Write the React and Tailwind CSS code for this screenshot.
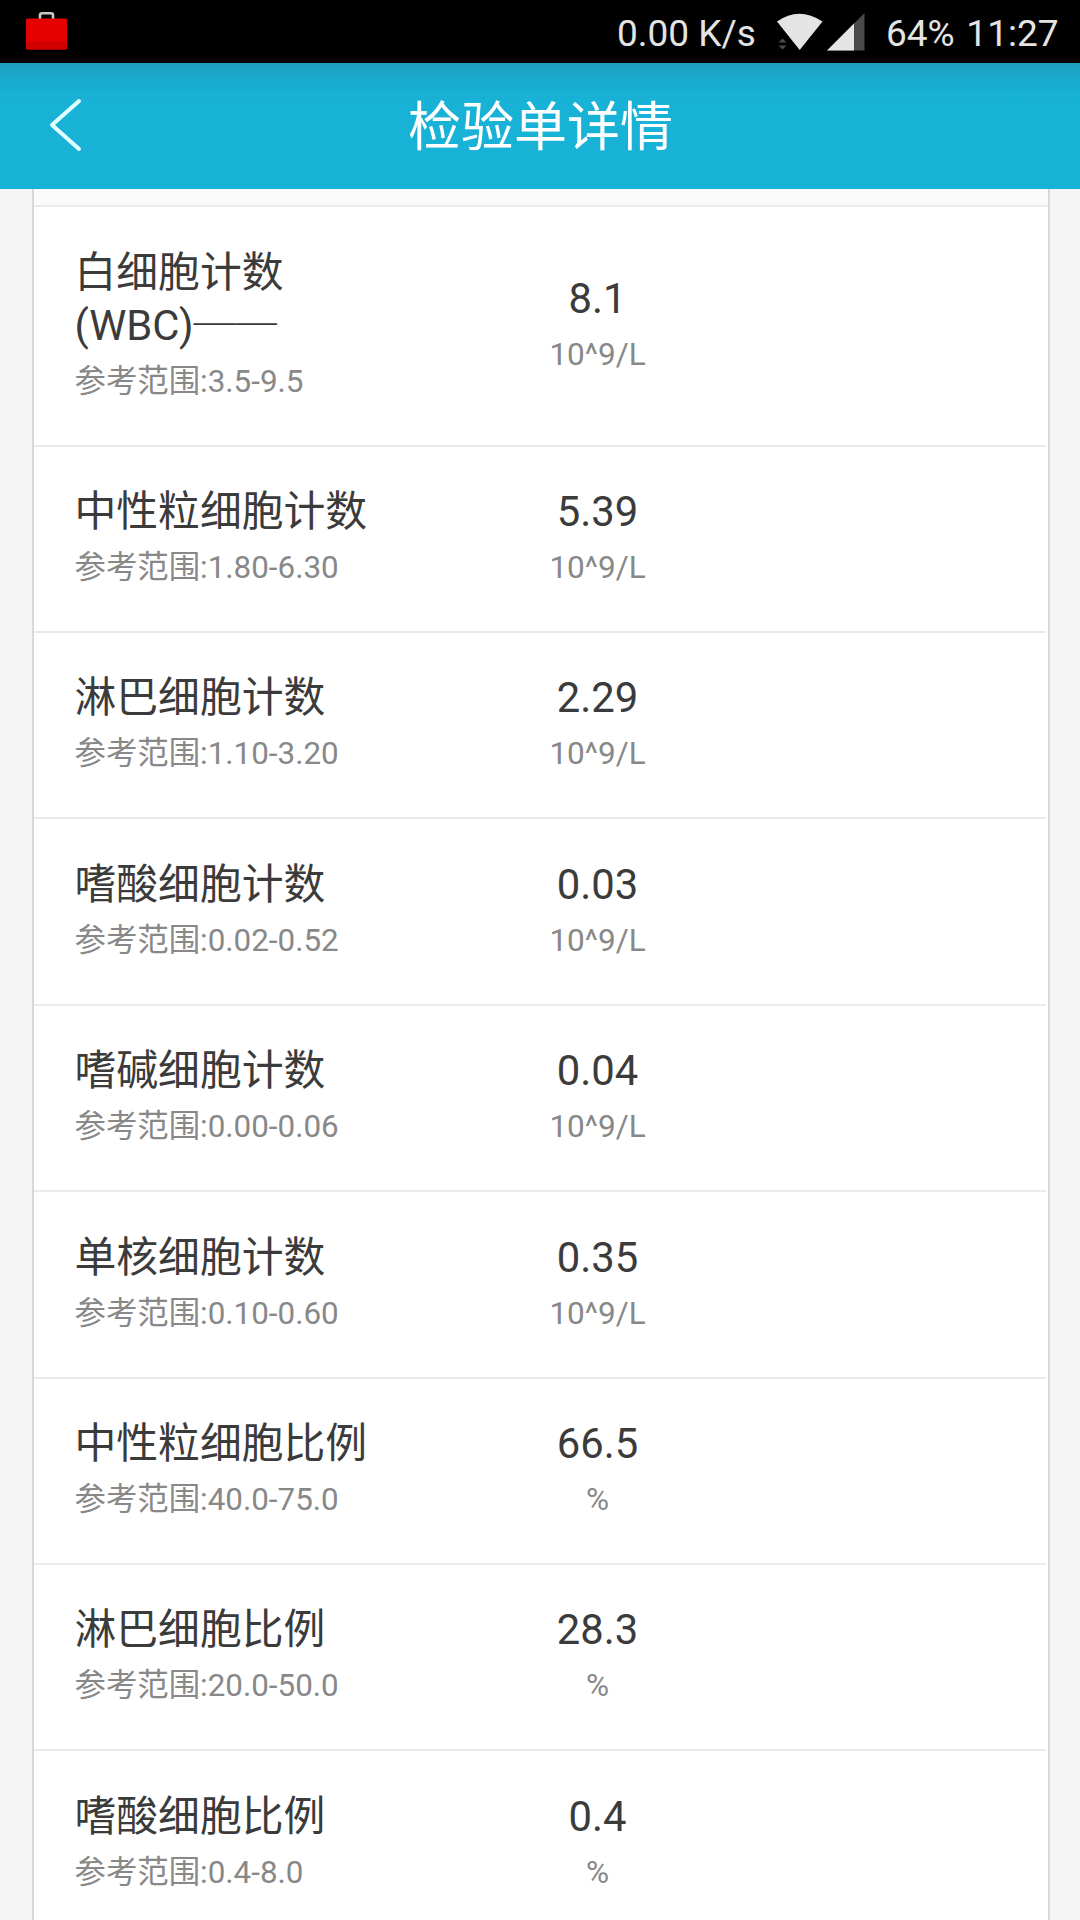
const rows = [
  { name: "白细胞计数", code: "(WBC)", range: "3.5-9.5", value: "8.1", unit: "10^9/L" },
  { name: "中性粒细胞计数", range: "1.80-6.30", value: "5.39", unit: "10^9/L" },
  { name: "淋巴细胞计数", range: "1.10-3.20", value: "2.29", unit: "10^9/L" },
  { name: "嗜酸细胞计数", range: "0.02-0.52", value: "0.03", unit: "10^9/L" },
  { name: "嗜碱细胞计数", range: "0.00-0.06", value: "0.04", unit: "10^9/L" },
  { name: "单核细胞计数", range: "0.10-0.60", value: "0.35", unit: "10^9/L" },
  { name: "中性粒细胞比例", range: "40.0-75.0", value: "66.5", unit: "%" },
  { name: "淋巴细胞比例", range: "20.0-50.0", value: "28.3", unit: "%" },
  { name: "嗜酸细胞比例", range: "0.4-8.0", value: "0.4", unit: "%" },
];

function StatusBar() {
  return (
    <div className="flex h-[63px] shrink-0 items-center bg-black text-[#e4e4e4]">
      <svg className="ml-[25px] h-[40px] w-[44px]" viewBox="0 0 44 40">
        <path d="M15 8V3Q15 1.300 17 1.300H26Q28 1.300 28 3V8" fill="none" stroke="#c9c9c0" strokeWidth="2.6" />
        <rect x="1" y="6.500" width="41" height="31" rx="1.5" fill="#e60000" />
        <rect x="1" y="29.500" width="41" height="8" rx="1.5" fill="#d00000" />
      </svg>
      <div className="ml-auto flex h-full items-center">
        <span className="mt-[3px] w-[160px] whitespace-nowrap text-[37px] leading-none">0.00 K/s</span>
        <svg className="h-[63px] w-[90px]" viewBox="0 0 90 63">
          <path d="M0 21.5Q22 6 45.5 21.5L22.7 50Z" fill="#e4e4e4" />
          <path d="M1.5 42.5L5.5 38.5L9.5 42.5ZM1.5 45.5L5.5 49.5L9.5 45.5Z" fill="#4a4a4a" />
          <path d="M50 50.5L87.500 13V50.500Z" fill="#4a4a4a" />
          <path d="M50 50.500L77 23.500V50.500Z" fill="#e4e4e4" />
        </svg>
        <span className="mt-[3px] ml-[19px] w-[194px] whitespace-nowrap text-[37px] leading-none [word-spacing:2.5px]">64% 11:27</span>
      </div>
    </div>
  );
}

function Header() {
  return (
    <header className="grid h-[126px] shrink-0 grid-cols-[1fr_auto_1fr] items-center bg-[#18b2d6] bg-[linear-gradient(#1e9ebd_0px,#1aa9cc_14px,#18b2d6_36px)] text-white">
      <svg className="ml-[48px] h-[56px] w-[36px]" viewBox="0 0 36 56" fill="none" stroke="#e2ffff" strokeWidth="4" strokeLinecap="round" strokeLinejoin="round">
        <path d="M31 3L4 27L31 51" />
      </svg>
      <h1 className="pt-[4px] pl-[1px] text-[53px] leading-[80px]">检验单详情</h1>
    </header>
  );
}

function ResultRow({ item }) {
  return (
    <div className="mr-[2px] grid grid-cols-[363.5px_319px] items-center border-b-2 border-[#ebebeb] pt-[38.4px] pb-[33px] pl-[40.5px]">
      <div>
        <div className="h-[53px] text-[41.8px] leading-[53px] text-[#3b3b3b]">{item.name}</div>
        {item.code && (
          <div className="flex h-[53px] text-[41.8px] leading-[53px] text-[#3b3b3b]">
            {item.code}
            <span lang="zh-CN" className="-mt-[3px] font-[family-name:'Noto_Sans_CJK_SC',sans-serif]">──</span>
          </div>
        )}
        <div className="h-[60px] text-[31.4px] leading-[60px] text-[#888888]">参考范围:{item.range}</div>
      </div>
      <div className="text-center">
        <div className="h-[53px] text-[41.8px] leading-[53px] text-[#3b3b3b]">{item.value}</div>
        <div className="h-[60px] text-[31.5px] leading-[60px] text-[#888888]">{item.unit}</div>
      </div>
    </div>
  );
}

export default function App() {
  return (
    <div className="flex h-[1920px] w-[1080px] flex-col overflow-hidden bg-[#f5f5f5] font-[Roboto,'Noto_Sans_CJK_SC',sans-serif]">
      <StatusBar />
      <Header />
      <main className="ml-[32px] min-h-0 w-[1018px] flex-1 overflow-hidden border-x-2 border-[#d8d8d8] bg-white">
        <div className="h-[18.3px] border-b-2 border-[#ebebeb] bg-[#fafafa]" />
        {rows.map((item) => (
          <ResultRow key={item.name} item={item} />
        ))}
      </main>
    </div>
  );
}
